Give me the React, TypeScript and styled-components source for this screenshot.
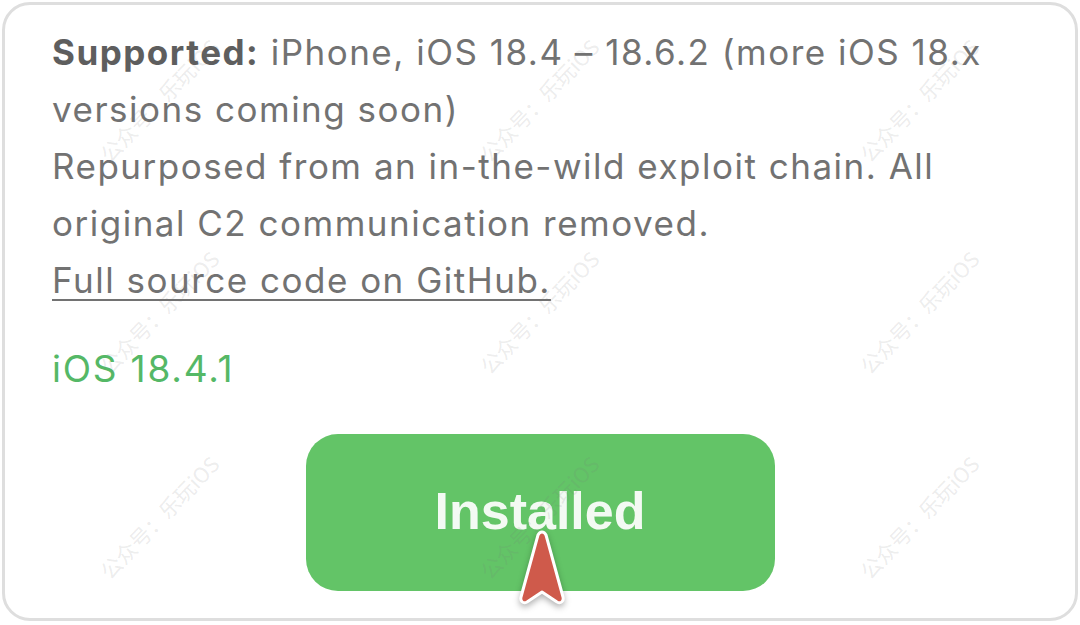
import styled, { createGlobalStyle } from "styled-components";

const GlobalStyle = createGlobalStyle`
  html, body {
    margin: 0;
    padding: 0;
    background: #ffffff;
  }
  body {
    font-family: Inter, "Liberation Sans", Arial, sans-serif;
    -webkit-font-smoothing: antialiased;
  }
`;

const Card = styled.section`
  position: relative;
  box-sizing: border-box;
  margin: 2px 2px 0 2px;
  height: 619px;
  border: 3px solid #dedede;
  border-radius: 28px;
  background: #ffffff;
  padding: 19px 70px 0 47px;
  overflow: hidden;
  display: flex;
  flex-direction: column;
`;

const Info = styled.p`
  margin: 0;
  font-size: 35px;
  line-height: 57px;
  letter-spacing: 1.5px;
  color: #727272;
`;

const Label = styled.strong`
  font-weight: 700;
  color: #5e5e5e;
`;

const SourceLink = styled.a`
  color: #727272;
  text-decoration: underline;
  text-decoration-thickness: 2px;
  text-underline-offset: 6px;
`;

const Version = styled.div`
  margin-top: 31px;
  font-size: 37px;
  line-height: 57px;
  letter-spacing: 1.8px;
  color: #55b866;
`;

const ButtonRow = styled.div`
  display: flex;
  justify-content: center;
  margin-top: 37px;
  margin-right: -23px;
`;

const InstallButton = styled.button`
  position: relative;
  width: 469px;
  height: 157px;
  border: none;
  border-radius: 32px;
  background: #63c467;
  color: #f3faf3;
  font-family: "Liberation Sans", Arial, sans-serif;
  font-size: 52px;
  font-weight: 700;
  padding: 0 0 4px 0;
  cursor: pointer;
`;

const Pointer = styled.svg`
  position: absolute;
  left: 212px;
  top: 95px;
  overflow: visible;
  filter: drop-shadow(0 3px 3px rgba(0, 0, 0, 0.3));
`;

const WatermarkLayer = styled.div`
  position: absolute;
  inset: 0;
  pointer-events: none;
  display: grid;
  grid-template-columns: repeat(3, 380px);
  grid-template-rows: 100px 212px 205px;
  margin-left: -36px;
  margin-top: -5px;
  z-index: 2;
`;

const Watermark = styled.span`
  align-self: end;
  justify-self: center;
  transform: translateY(50%) rotate(-46deg);
  font-family: "Noto Sans CJK SC", "Noto Sans", sans-serif;
  font-size: 21px;
  white-space: nowrap;
  color: rgba(120, 120, 120, 0.15);
`;

const marks = Array.from({ length: 9 }, (_, i) => i);

function App() {
  return (
    <>
      <GlobalStyle />
      <Card>
        <Info>
          <Label>Supported:</Label> iPhone, iOS 18.4 – 18.6.2 (more iOS 18.x
          versions coming soon)
          <br />
          Repurposed from an in-the-wild exploit chain. All original C2
          communication removed.
          <br />
          <SourceLink href="#">Full source code on GitHub.</SourceLink>
        </Info>
        <Version>iOS 18.4.1</Version>
        <ButtonRow>
          <InstallButton>
            Installed
            <Pointer width="48" height="78" viewBox="0 0 48 78">
              <path
                d="M24 3 C26 3 27 4 28 6 L45 68 C46 72 43 75 39 73 L24 63 L9 73 C5 75 2 72 3 68 L20 6 C21 4 22 3 24 3 Z"
                fill="#cf5a4b"
                stroke="#ffffff"
                strokeWidth="3"
                strokeLinejoin="round"
              />
            </Pointer>
          </InstallButton>
        </ButtonRow>
        <WatermarkLayer>
          {marks.map((i) => (
            <Watermark key={i}>公众号：乐玩iOS</Watermark>
          ))}
        </WatermarkLayer>
      </Card>
    </>
  );
}

export default App;
